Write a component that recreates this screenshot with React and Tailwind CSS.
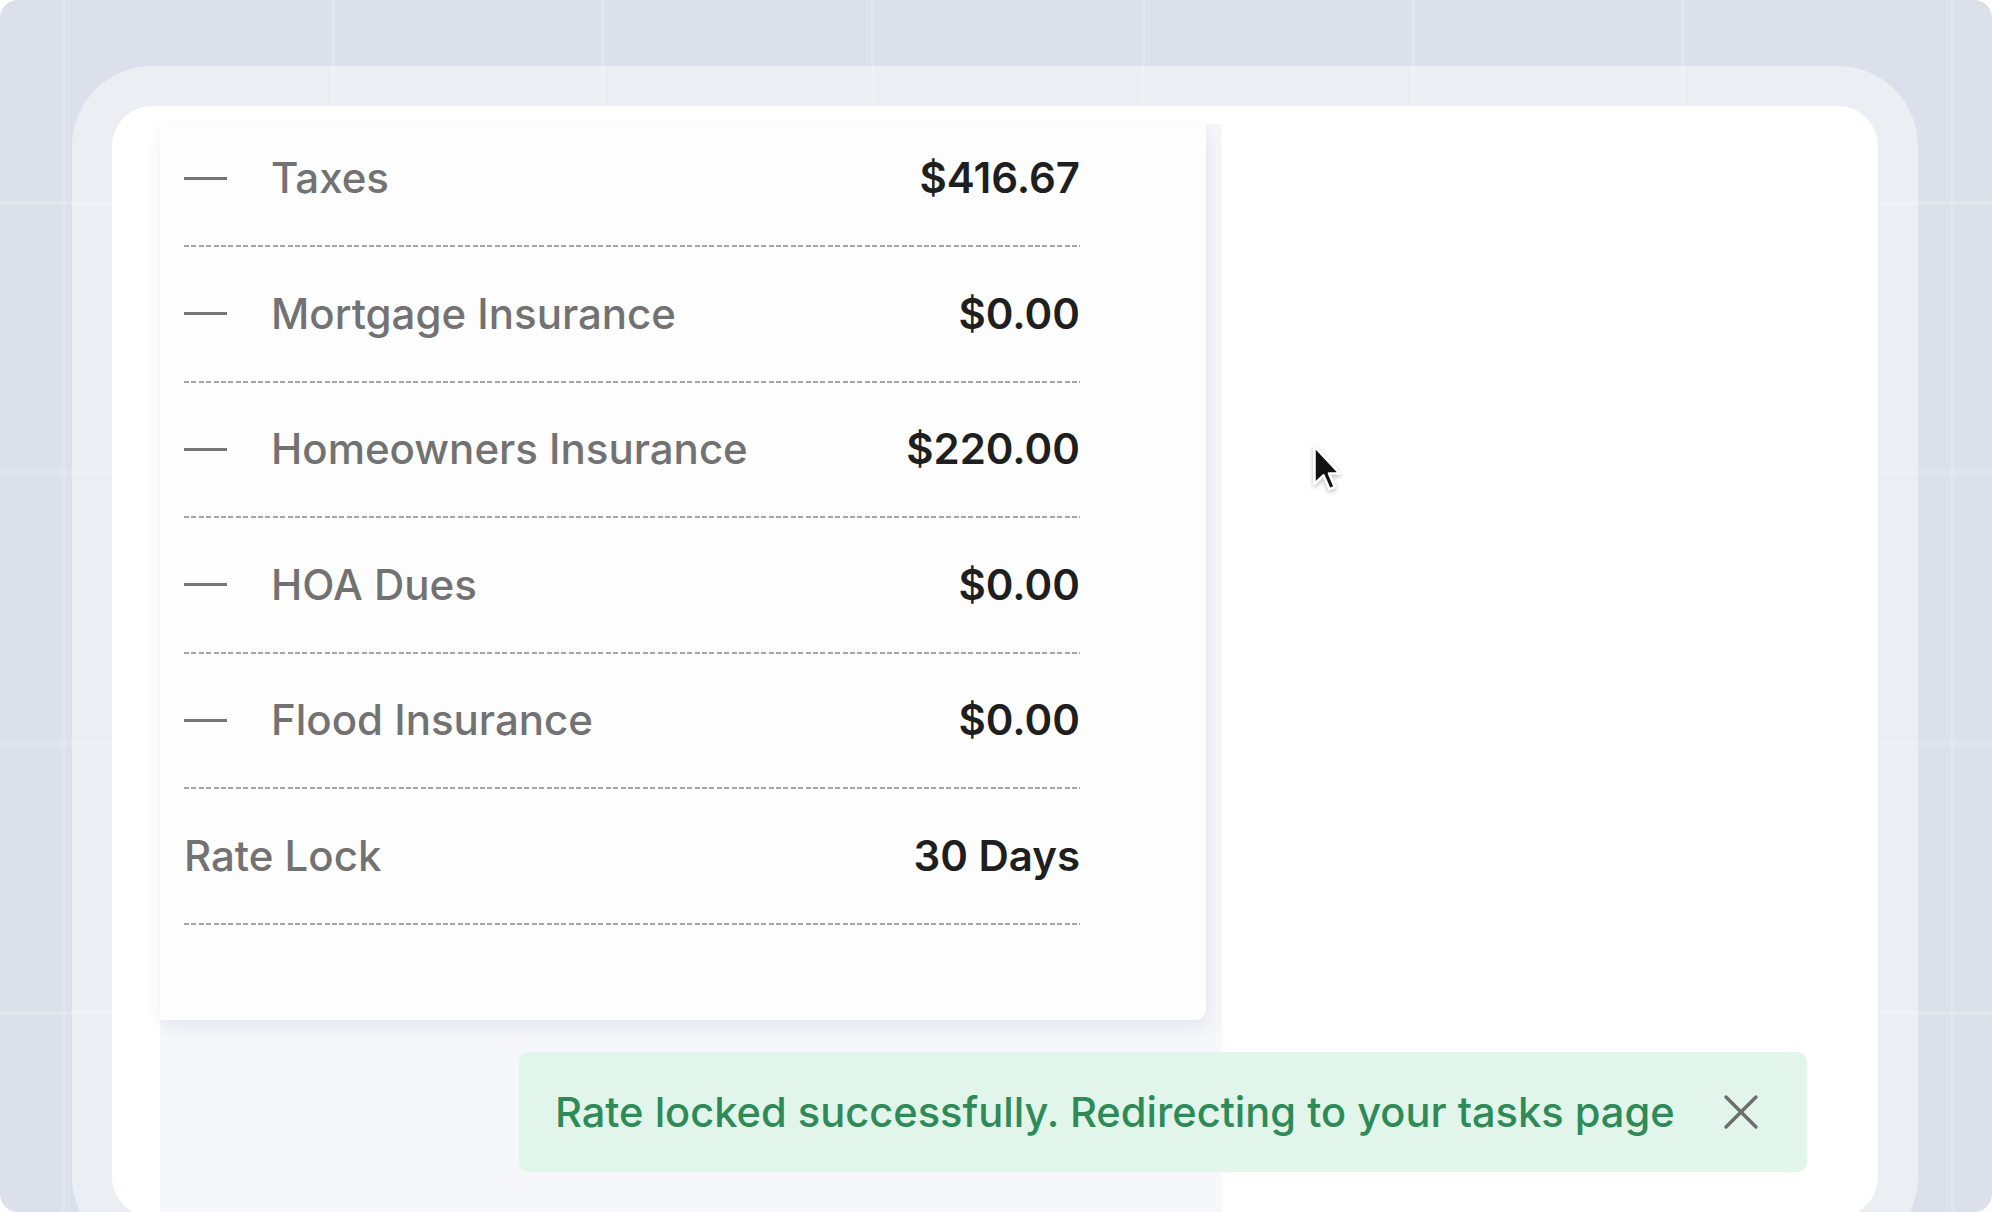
import React from 'react';
import { X } from 'lucide-react';

const rows = [
  { label: 'Taxes', value: '$416.67', dash: true },
  { label: 'Mortgage Insurance', value: '$0.00', dash: true },
  { label: 'Homeowners Insurance', value: '$220.00', dash: true },
  { label: 'HOA Dues', value: '$0.00', dash: true },
  { label: 'Flood Insurance', value: '$0.00', dash: true },
  { label: 'Rate Lock', value: '30 Days', dash: false },
];

function Cursor() {
  return (
    <svg width="32" height="52" viewBox="0 0 19 31" className="drop-shadow-[0_2px_2px_rgba(0,0,0,0.25)]">
      <path
        d="M2 2 L2 24.5 L7.4 19.4 L11 27.6 L14.2 26.2 L10.7 18.2 L17.2 18.2 Z"
        fill="#111"
        stroke="#fff"
        strokeWidth="1.6"
        strokeLinejoin="round"
      />
    </svg>
  );
}

export default function App() {
  return (
    <div className="relative w-[1992px] h-[1212px] overflow-hidden bg-white font-['Inter','Liberation_Sans',sans-serif]">
      {/* backdrop with faint grid */}
      <div className="h-full overflow-hidden rounded-[18px] bg-[#dbe0ea] bg-[linear-gradient(to_right,rgba(255,255,255,0.16)_4px,transparent_4px),linear-gradient(to_bottom,rgba(255,255,255,0.16)_4px,transparent_4px)] bg-size-[270px_270px] bg-position-[61px_201px] pt-[66px] pl-[72px] pr-[74px]">
        <div className="h-[1191px] rounded-[80px] bg-white/45 p-[40px]">
          <div className="h-full overflow-hidden rounded-[40px] bg-white pt-[18px] pl-[48px]">
            <div className="h-full w-[1062px] bg-[#f5f7fb]">
              <div className="h-[896px] w-[1046px] rounded-br-[10px] bg-[#fdfdfd] pl-[24px] pr-[126px] shadow-[2px_6px_18px_rgba(40,55,90,0.09)]">
                {rows.map((r, i) => (
                  <div key={r.label} className={i === 0 ? 'pt-[29px]' : 'pt-[41.5px]'}>
                    <div className="flex h-[50px] items-center text-[42px] leading-[50px]">
                      {r.dash && <div className="mr-[44px] h-[3px] w-[43px] bg-[#767676]" />}
                      <span className="font-medium text-[#727272]">{r.label}</span>
                      <span className="ml-auto font-semibold text-[#1f1f1f]">{r.value}</span>
                    </div>
                    <div className="mt-[42px] h-[2px] bg-[repeating-linear-gradient(to_right,#a6a6a6_0_5px,transparent_5px_7.4px)]" />
                  </div>
                ))}
              </div>
            </div>
          </div>
        </div>
      </div>

      {/* toast */}
      <div className="absolute left-[519px] top-[1052px] flex h-[120px] w-[1288px] items-center rounded-[10px] bg-[#e1f5ea] pl-[36px] pr-[36px]">
        <span className="text-[41.6px] font-medium text-[#2e8a56]">
          Rate locked successfully. Redirecting to your tasks page
        </span>
        <X className="ml-auto h-[60px] w-[60px] text-[#6e6e6e]" strokeWidth={1.4} />
      </div>

      {/* mouse pointer */}
      <div className="absolute left-[1311px] top-[443px]">
        <Cursor />
      </div>
    </div>
  );
}
